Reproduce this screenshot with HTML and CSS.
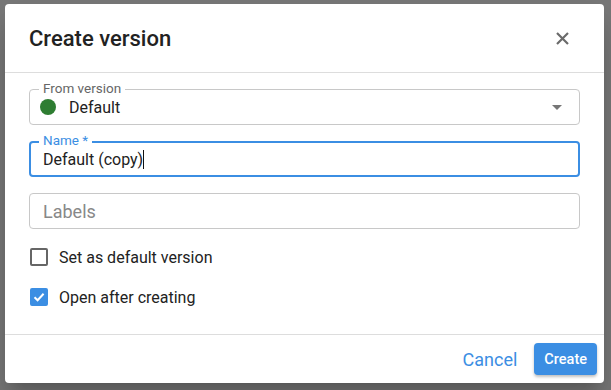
FILE: index.html
```html
<!DOCTYPE html>
<html lang="en">
<head>
    <meta charset="UTF-8">
    <title>Create version</title>
    <link rel="stylesheet" href="styles.css">
</head>
<body>
    <div class="dialog">
        <div class="dialog-header">
            <h2 class="dialog-title">Create version</h2>
            <button class="close-btn" aria-label="Close">
                <svg width="13" height="13" viewBox="0 0 13 13">
                    <path d="M1 1L12 12M12 1L1 12" stroke="#6b6b6b" stroke-width="2.2" fill="none"/>
                </svg>
            </button>
        </div>

        <div class="dialog-body">
            <div class="field">
                <span class="field-label">From version</span>
                <span class="dot"></span>
                <span class="field-value">Default</span>
                <span class="caret-down"></span>
            </div>

            <div class="field focused">
                <span class="field-label">Name *</span>
                <span class="field-value">Default (copy)<span class="cursor"></span></span>
            </div>

            <div class="field">
                <span class="field-placeholder">Labels</span>
            </div>

            <label class="check-row">
                <span class="checkbox"></span>
                Set as default version
            </label>
            <label class="check-row">
                <span class="checkbox checked">
                    <svg width="12" height="10" viewBox="0 0 12 10">
                        <path d="M1.5 5.2L4.6 8.2L10.6 1.8" stroke="#fff" stroke-width="2" fill="none"/>
                    </svg>
                </span>
                Open after creating
            </label>
        </div>

        <div class="dialog-footer">
            <button class="btn-text">Cancel</button>
            <button class="btn-primary">Create</button>
        </div>
    </div>
</body>
</html>
```

FILE: styles.css
```css
body {
    margin: 0;
    padding: 4px 7px 7px 5px;
    background-color: #777;
    font-family: Roboto, "Noto Sans", sans-serif;
    color: #222;
}
.dialog {
    width: 599px;
    height: 379px;
    background: #fff;
    border-radius: 4px;
    display: flex;
    flex-direction: column;
    box-shadow: 0 11px 15px -7px rgba(0, 0, 0, 0.2), 0 24px 38px 3px rgba(0, 0, 0, 0.14);
}
.dialog-header {
    height: 68px;
    border-bottom: 1px solid #ddd;
    display: flex;
    align-items: center;
    justify-content: space-between;
    padding: 0 35px 0 24px;
}
.dialog-title {
    margin: 0;
    font-size: 22px;
    font-weight: 500;
    color: #222;
}
.close-btn {
    background: none;
    border: none;
    padding: 0;
    width: 13px;
    height: 13px;
    display: flex;
    cursor: pointer;
}
.dialog-body {
    flex: 1;
    padding: 16px 24px 0 24px;
    display: flex;
    flex-direction: column;
}
.field {
    position: relative;
    height: 36px;
    border: 1px solid #c8c8c8;
    border-radius: 4px;
    box-sizing: border-box;
    display: flex;
    align-items: center;
    padding: 0 13px;
    margin-bottom: 16px;
}
.field.focused {
    border: 2px solid #3b8ee3;
    padding: 0 12px;
}
.field-label {
    position: absolute;
    top: -10px;
    left: 9px;
    padding: 0 4px;
    background: #fff;
    font-size: 13.5px;
    line-height: 16px;
    color: #666;
}
.field.focused .field-label {
    color: #3b8ee3;
    top: -11px;
    left: 8px;
}
.field-value {
    font-size: 16px;
    color: #222;
}
.field-placeholder {
    font-size: 18px;
    color: #888;
}
.dot {
    width: 16px;
    height: 16px;
    border-radius: 50%;
    background: #2e7d32;
    margin: 0 13px 0 -3px;
}
.caret-down {
    margin-left: auto;
    margin-right: 4px;
    border-left: 5.5px solid transparent;
    border-right: 5.5px solid transparent;
    border-top: 5.5px solid #767676;
}
.cursor {
    display: inline-block;
    width: 1px;
    height: 19px;
    background: #111;
    vertical-align: -4px;
}
.check-row {
    display: flex;
    align-items: center;
    gap: 11px;
    height: 24px;
    font-size: 16px;
    color: #222;
    margin-bottom: 16px;
    padding-left: 1px;
}
.checkbox {
    width: 18px;
    height: 18px;
    box-sizing: border-box;
    border: 2px solid #666;
    border-radius: 2px;
    display: flex;
    align-items: center;
    justify-content: center;
}
.checkbox.checked {
    background: #3b8ee3;
    border-color: #3b8ee3;
}
.dialog-footer {
    height: 48px;
    border-top: 1px solid #ddd;
    display: flex;
    align-items: center;
    justify-content: flex-end;
    gap: 9px;
    padding-right: 7px;
}
.btn-text {
    background: none;
    border: none;
    font-family: inherit;
    font-size: 18px;
    color: #3b8ee3;
    padding: 6px 8px;
    cursor: pointer;
}
.btn-primary {
    background: #3b8ee3;
    color: #fff;
    border: none;
    border-radius: 4px;
    font-family: inherit;
    font-size: 14.5px;
    font-weight: 500;
    height: 32px;
    padding: 0 10px;
    cursor: pointer;
    box-shadow: 0 2px 3px rgba(0, 0, 0, 0.25);
}
```
